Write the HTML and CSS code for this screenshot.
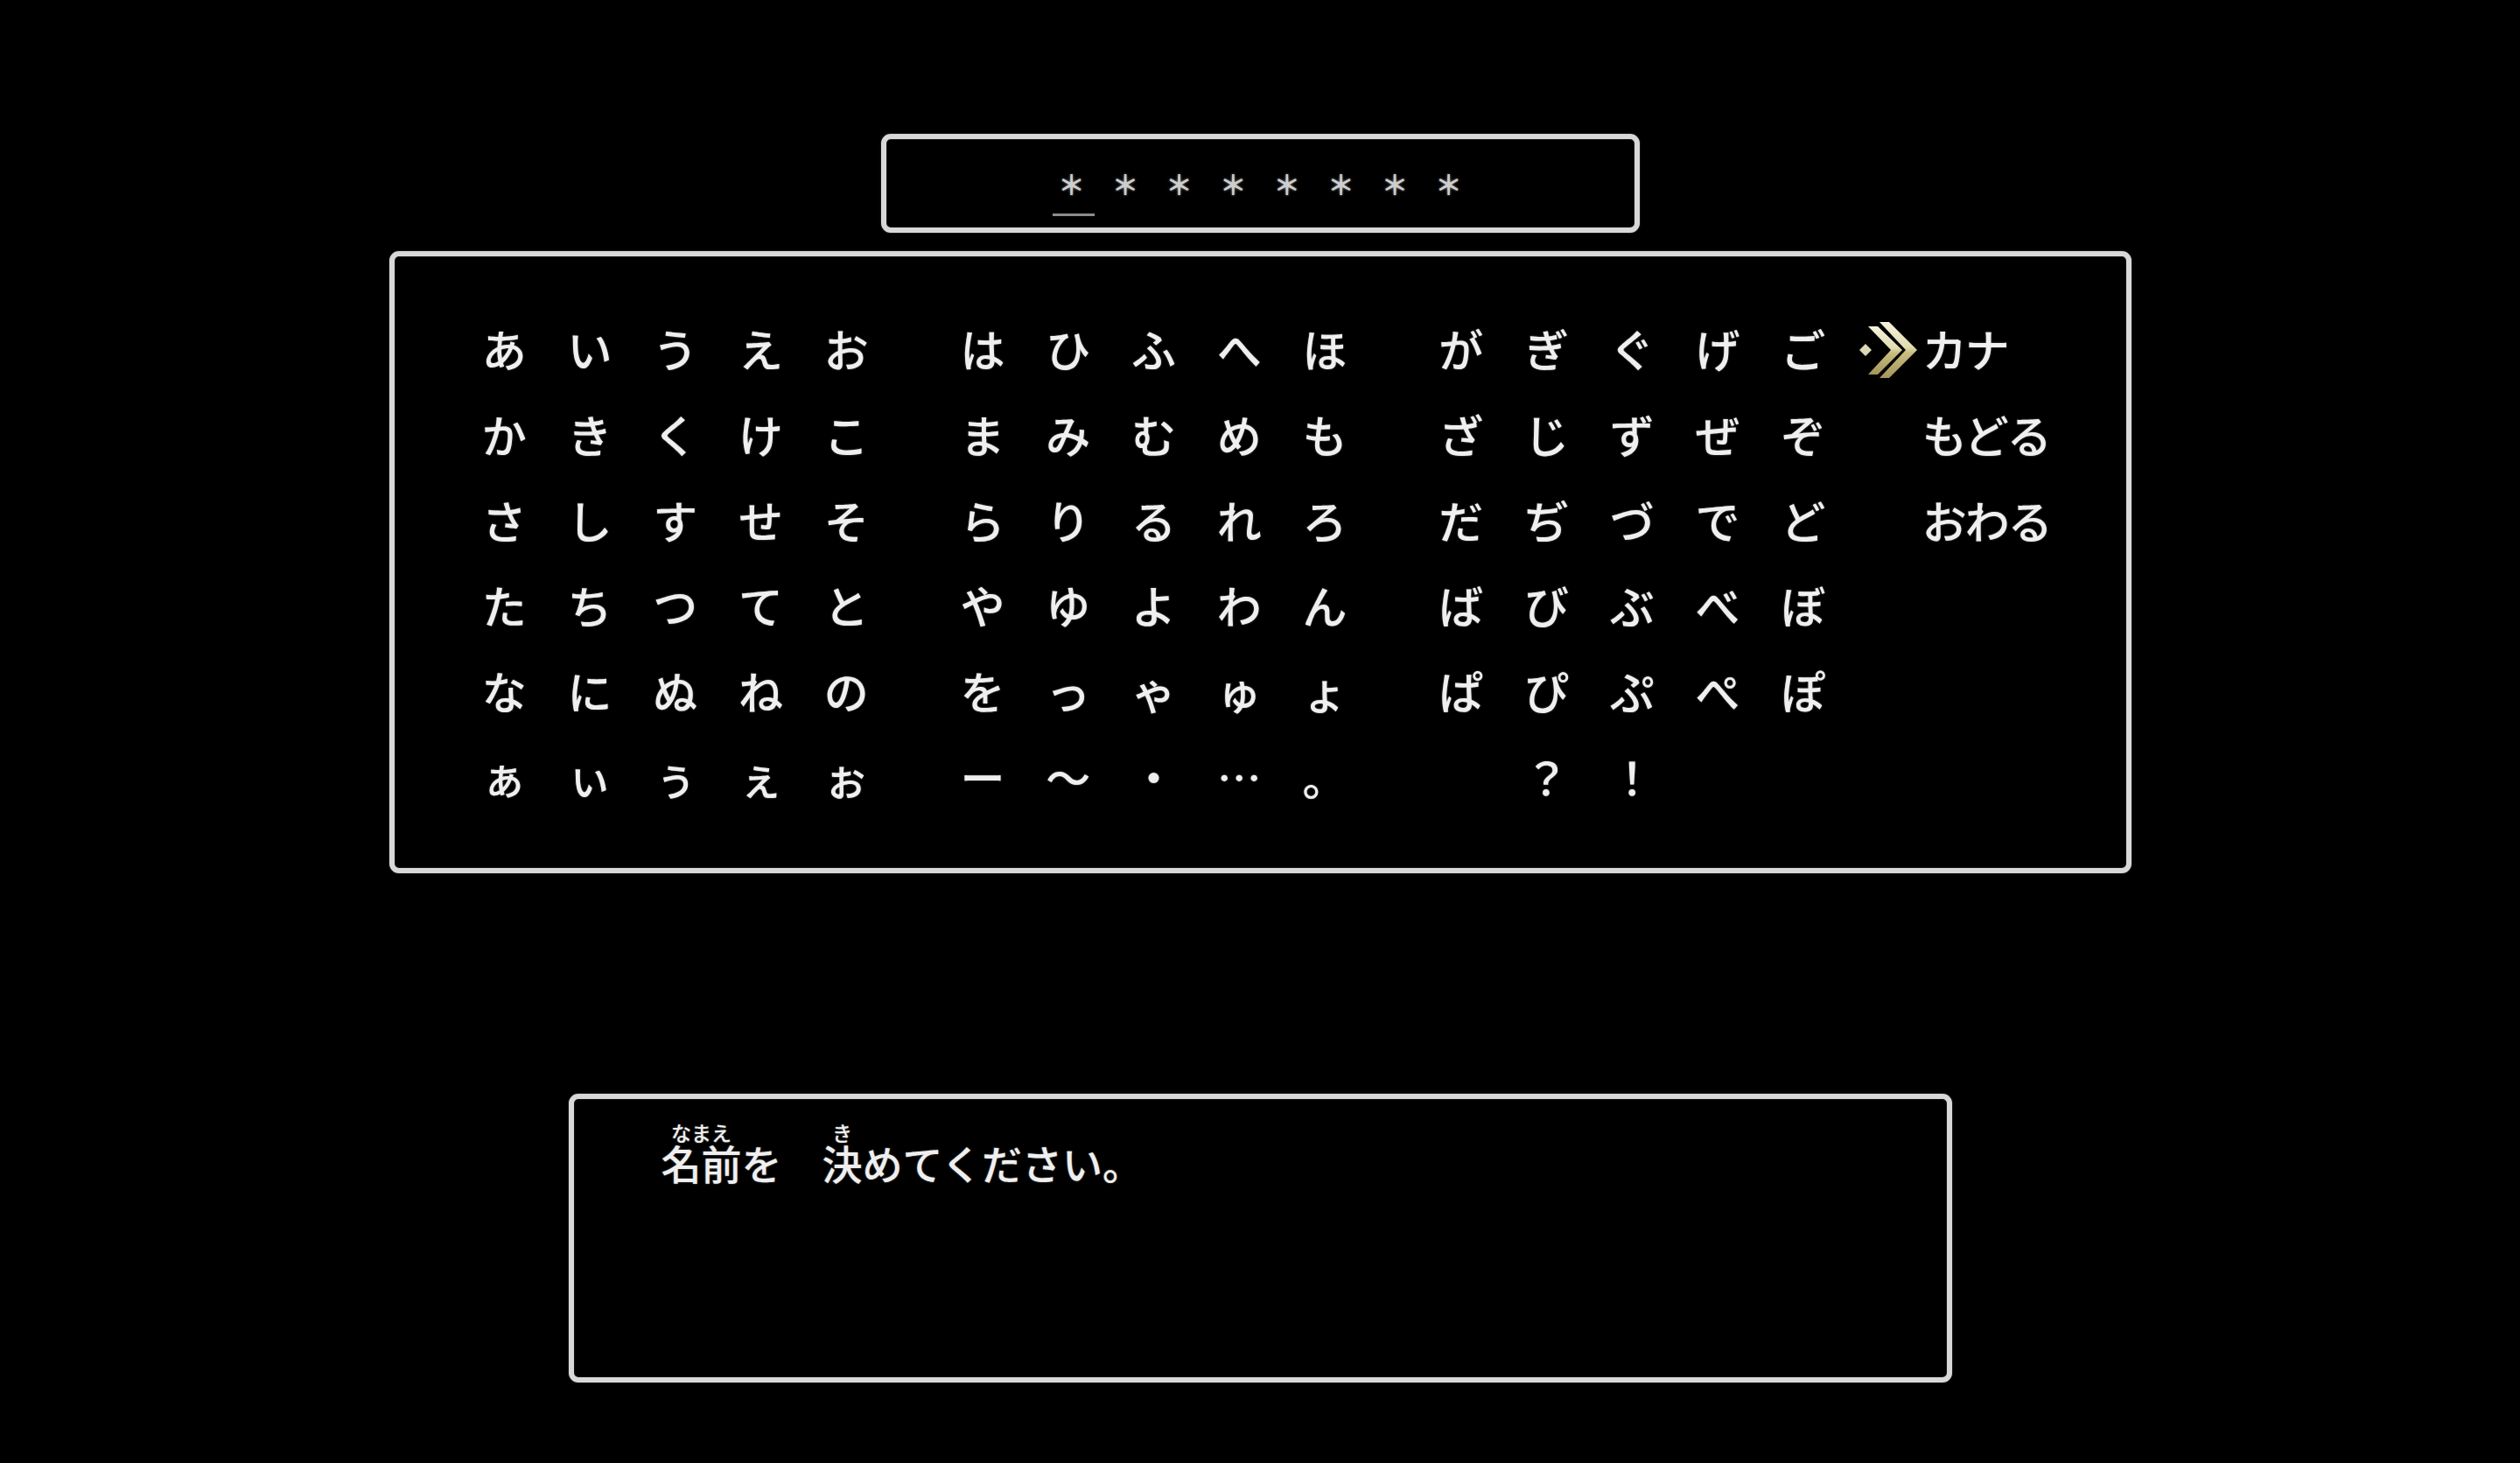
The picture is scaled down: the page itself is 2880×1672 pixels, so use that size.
FILE: index.html
```html
<!DOCTYPE html>
<html lang="ja">
<head>
<meta charset="utf-8">
<title>名前入力</title>
<link rel="stylesheet" href="styles.css">
</head>
<body>
<div class="screen">
  <div class="name-box">
    <div class="stars">
      <span class="star current">＊</span><span class="star">＊</span><span class="star">＊</span><span class="star">＊</span><span class="star">＊</span><span class="star">＊</span><span class="star">＊</span><span class="star">＊</span>
    </div>
  </div>

  <div class="keyboard">
    <div class="group">
      <span>あ</span><span>い</span><span>う</span><span>え</span><span>お</span>
      <span>か</span><span>き</span><span>く</span><span>け</span><span>こ</span>
      <span>さ</span><span>し</span><span>す</span><span>せ</span><span>そ</span>
      <span>た</span><span>ち</span><span>つ</span><span>て</span><span>と</span>
      <span>な</span><span>に</span><span>ぬ</span><span>ね</span><span>の</span>
      <span>ぁ</span><span>ぃ</span><span>ぅ</span><span>ぇ</span><span>ぉ</span>
    </div>
    <div class="group">
      <span>は</span><span>ひ</span><span>ふ</span><span>へ</span><span>ほ</span>
      <span>ま</span><span>み</span><span>む</span><span>め</span><span>も</span>
      <span>ら</span><span>り</span><span>る</span><span>れ</span><span>ろ</span>
      <span>や</span><span>ゆ</span><span>よ</span><span>わ</span><span>ん</span>
      <span>を</span><span>っ</span><span>ゃ</span><span>ゅ</span><span>ょ</span>
      <span>ー</span><span>～</span><span>・</span><span>…</span><span>。</span>
    </div>
    <div class="group">
      <span>が</span><span>ぎ</span><span>ぐ</span><span>げ</span><span>ご</span>
      <span>ざ</span><span>じ</span><span>ず</span><span>ぜ</span><span>ぞ</span>
      <span>だ</span><span>ぢ</span><span>づ</span><span>で</span><span>ど</span>
      <span>ば</span><span>び</span><span>ぶ</span><span>べ</span><span>ぼ</span>
      <span>ぱ</span><span>ぴ</span><span>ぷ</span><span>ぺ</span><span>ぽ</span>
      <span></span><span>？</span><span>！</span><span></span><span></span>
    </div>
    <ul class="menu">
      <li class="menu-item selected">
        <svg class="cursor" viewBox="0 0 90 80" width="90" height="80" aria-hidden="true">
          <defs>
            <linearGradient id="gold" x1="0" y1="0" x2="0" y2="1">
              <stop offset="0" stop-color="#f6f3dc"/>
              <stop offset="0.45" stop-color="#e2dcb0"/>
              <stop offset="0.55" stop-color="#c9bd80"/>
              <stop offset="1" stop-color="#a4955a"/>
            </linearGradient>
          </defs>
          <polygon points="10,40 17,33 24,40 17,47" fill="#dcd8b4"/>
          <polygon points="20,13 31,13 59,40 31,68 20,68 46,40" fill="url(#gold)"/>
          <polygon points="33,8 44,8 76,40 44,72 33,72 63,40" fill="url(#gold)"/>
        </svg>カナ</li>
      <li class="menu-item">もどる</li>
      <li class="menu-item">おわる</li>
    </ul>
  </div>

  <div class="message">
    <p class="message-text"><ruby>名前<rt>なまえ</rt></ruby>を　<ruby>決<rt>き</rt></ruby>めてください。</p>
  </div>
</div>
</body>
</html>
```

FILE: styles.css
```css
html, body {
  margin: 0;
  padding: 0;
  background: #000;
}

body {
  width: 2880px;
  height: 1672px;
  overflow: hidden;
  font-family: "Noto Sans CJK JP", "Noto Sans", sans-serif;
  color: #efefef;
}

.screen {
  display: flex;
  flex-direction: column;
  align-items: center;
  padding-top: 153px;
}

.name-box,
.keyboard,
.message {
  box-sizing: border-box;
  border: 6px solid #d8d8d8;
  border-radius: 11px;
  box-shadow: 0 0 2px rgba(255, 255, 255, 0.35), inset 0 0 2px rgba(255, 255, 255, 0.25);
  background: #000;
}

/* name entry */
.name-box {
  width: 867px;
  height: 113px;
  display: flex;
  align-items: center;
  justify-content: center;
}

.stars {
  display: flex;
}

.star {
  position: relative;
  width: 61.6px;
  text-align: center;
  font-size: 31px;
  font-weight: 700;
  line-height: 60px;
  color: #cdcdcd;
  text-shadow: 0 0 3px rgba(255, 255, 255, 0.5);
}

.star.current::after {
  content: "";
  position: absolute;
  left: 9px;
  top: 64px;
  width: 48px;
  height: 3px;
  background: #8c8c8c;
}

/* keyboard */
.keyboard {
  width: 1991px;
  height: 711px;
  margin-top: 21px;
  padding: 57px 0 0 77px;
  display: flex;
  align-items: flex-start;
  gap: 58px;
}

.group {
  display: grid;
  grid-template-columns: repeat(5, 97.75px);
  grid-auto-rows: 97.8px;
}

.group span,
.menu-item {
  font-size: 51px;
  line-height: 97.8px;
  font-weight: 500;
  text-shadow: 0 0 2px rgba(255, 255, 255, 0.45);
}

.group span {
  text-align: center;
}

.menu {
  list-style: none;
  margin: 0 0 0 29px;
  padding: 0;
}

.menu-item {
  position: relative;
  height: 97.8px;
  letter-spacing: -2px;
}

.cursor {
  position: absolute;
  left: -82px;
  top: 10px;
}

/* message window */
.message {
  width: 1581px;
  height: 330px;
  margin-top: 252px;
  padding: 27px 0 0 100px;
}

.message-text {
  margin: 0;
  font-size: 46px;
  line-height: 69px;
  font-weight: 500;
  text-shadow: 0 0 2px rgba(255, 255, 255, 0.45);
}

.message-text ruby {
  ruby-align: center;
}

.message-text rt {
  font-size: 23px;
  line-height: 1.2;
  ruby-align: center;
}
```
